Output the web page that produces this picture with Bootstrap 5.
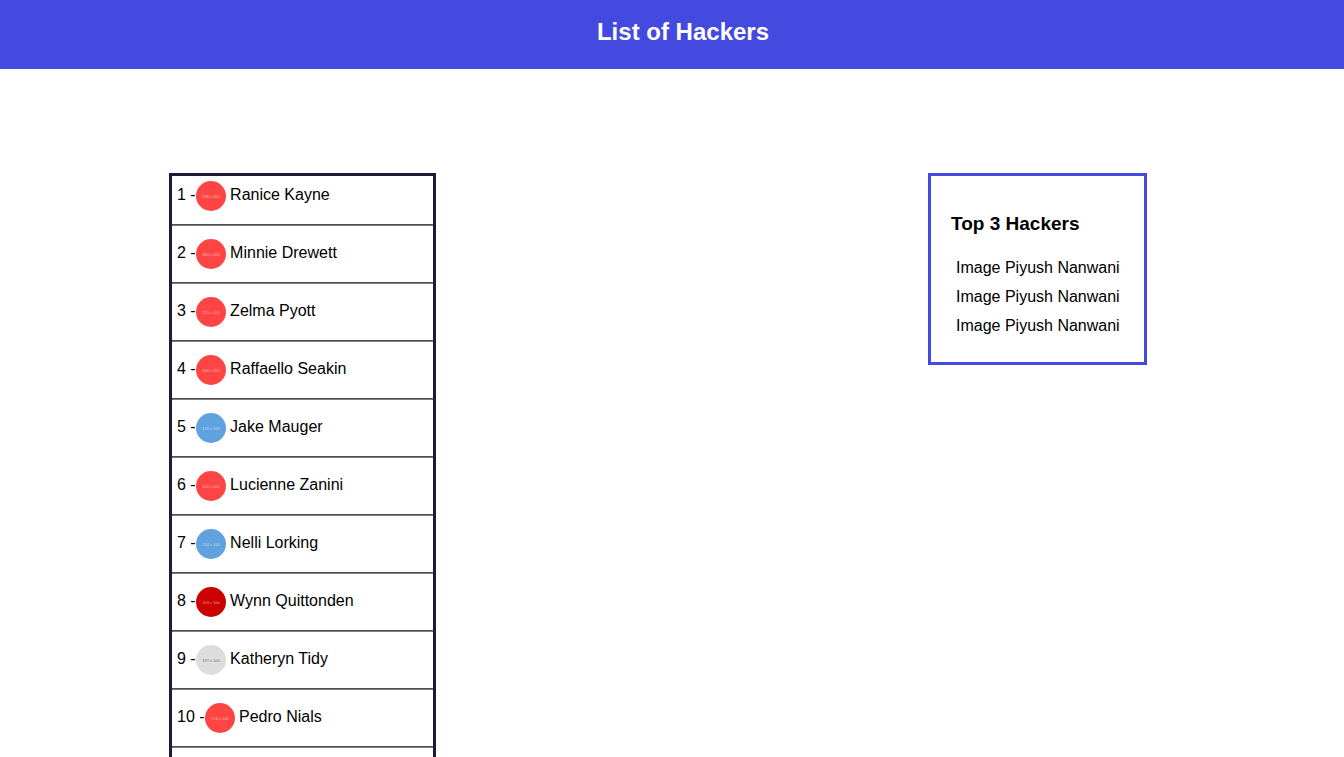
<!DOCTYPE html>
<html lang="en">
<head>
<meta charset="utf-8">
<meta name="viewport" content="width=device-width, initial-scale=1">
<title>List of Hackers</title>
<link href="https://cdn.jsdelivr.net/npm/bootstrap@5.3.0/dist/css/bootstrap.min.css" rel="stylesheet">
<script defer src="https://cdn.jsdelivr.net/npm/bootstrap@5.3.0/dist/js/bootstrap.bundle.min.js"></script>
<style>
body { font: 16px/19px "Liberation Sans", Arial, sans-serif; color: #000; }
.page-head { background: #444adf; padding: 18px 0 23px 22px; }
.page-head h1 { font-size: 24px; line-height: 28px; font-weight: 700; }
.board { padding: 104px 197px 0 169px; }
.hackers { width: 267px; border: 3px solid #1b1b3a; }
.hacker { padding: 5px; line-height: 18px; }
.hackers hr { margin: 8px 0; border: 1px solid; border-color: #4d4d4d #808080 #808080 #4d4d4d; opacity: 1; }
.avatar { width: 30px; height: 30px; vertical-align: middle; font-size: 4px; }
.avatar text { fill: #fff; fill-opacity: .6; text-anchor: middle; }
.red { fill: #ff4444; }
.blue { fill: #5fa2dd; }
.crimson { fill: #cc0000; }
.silver { fill: #dddddd; }
.avatar .silver + text { fill: #000; }
.top-three { width: 219px; border: 3px solid #444adf; padding: 38px 20px 22px; white-space: nowrap; }
.top-three h2 { font-size: 19px; line-height: 20px; font-weight: 700; margin-bottom: 19px; }
.top-three li { padding: 5px; }
</style>
</head>
<body class="d-flex flex-column min-vh-100">
<header class="page-head text-center text-white"><h1 class="m-0">List of Hackers</h1></header>
<main class="board d-flex flex-fill justify-content-between">
  <section class="hackers border-bottom-0 flex-shrink-0" aria-label="Hackers">
    <div class="hacker">1 -<svg class="avatar" viewBox="0 0 30 30"><circle class="red" cx="15" cy="15" r="15"/><text x="15" y="17">238 x 100</text></svg> Ranice Kayne</div><hr>
    <div class="hacker">2 -<svg class="avatar" viewBox="0 0 30 30"><circle class="red" cx="15" cy="15" r="15"/><text x="15" y="17">183 x 100</text></svg> Minnie Drewett</div><hr>
    <div class="hacker">3 -<svg class="avatar" viewBox="0 0 30 30"><circle class="red" cx="15" cy="15" r="15"/><text x="15" y="17">213 x 100</text></svg> Zelma Pyott</div><hr>
    <div class="hacker">4 -<svg class="avatar" viewBox="0 0 30 30"><circle class="red" cx="15" cy="15" r="15"/><text x="15" y="17">168 x 100</text></svg> Raffaello Seakin</div><hr>
    <div class="hacker">5 -<svg class="avatar" viewBox="0 0 30 30"><circle class="blue" cx="15" cy="15" r="15"/><text x="15" y="17">159 x 100</text></svg> Jake Mauger</div><hr>
    <div class="hacker">6 -<svg class="avatar" viewBox="0 0 30 30"><circle class="red" cx="15" cy="15" r="15"/><text x="15" y="17">149 x 100</text></svg> Lucienne Zanini</div><hr>
    <div class="hacker">7 -<svg class="avatar" viewBox="0 0 30 30"><circle class="blue" cx="15" cy="15" r="15"/><text x="15" y="17">232 x 100</text></svg> Nelli Lorking</div><hr>
    <div class="hacker">8 -<svg class="avatar" viewBox="0 0 30 30"><circle class="crimson" cx="15" cy="15" r="15"/><text x="15" y="17">103 x 100</text></svg> Wynn Quittonden</div><hr>
    <div class="hacker">9 -<svg class="avatar" viewBox="0 0 30 30"><circle class="silver" cx="15" cy="15" r="15"/><text x="15" y="17">197 x 100</text></svg> Katheryn Tidy</div><hr>
    <div class="hacker">10 -<svg class="avatar" viewBox="0 0 30 30"><circle class="red" cx="15" cy="15" r="15"/><text x="15" y="17">176 x 100</text></svg> Pedro Nials</div><hr>
  </section>
  <aside class="top-three align-self-start flex-shrink-0">
    <h2 class="mt-0">Top 3 Hackers</h2>
    <ul class="list-unstyled m-0">
      <li>Image Piyush Nanwani</li>
      <li>Image Piyush Nanwani</li>
      <li>Image Piyush Nanwani</li>
    </ul>
  </aside>
</main>
</body>
</html>
